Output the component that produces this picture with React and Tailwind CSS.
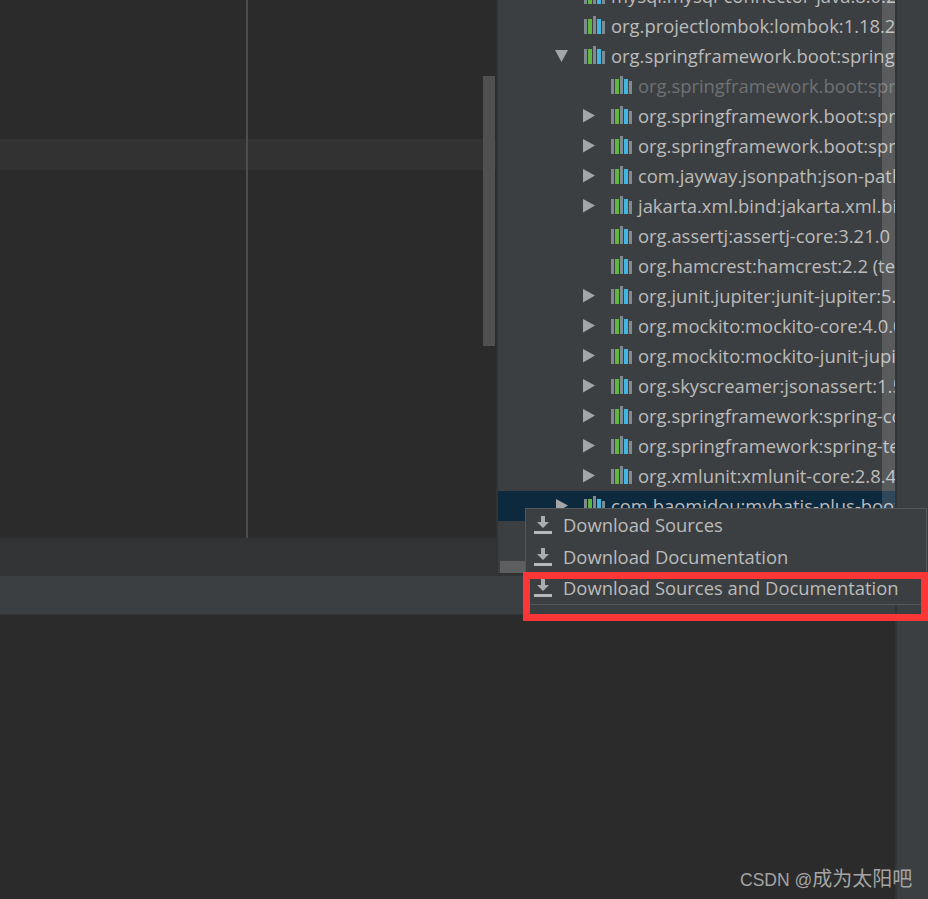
import React from "react";

const rows = [
  { level: 1, text: "mysql:mysql-connector-java:8.0.29 (runtime)" },
  { level: 1, text: "org.projectlombok:lombok:1.18.24" },
  { level: 1, arrow: "down", text: "org.springframework.boot:spring-boot-starter-test:2.7.0" },
  { level: 2, muted: true, text: "org.springframework.boot:spring-boot-starter:2.7.0" },
  { level: 2, arrow: "right", text: "org.springframework.boot:spring-boot-test:2.7.0" },
  { level: 2, arrow: "right", text: "org.springframework.boot:spring-boot-test-autoconfigure" },
  { level: 2, arrow: "right", text: "com.jayway.jsonpath:json-path:2.7.0" },
  { level: 2, arrow: "right", text: "jakarta.xml.bind:jakarta.xml.bind-api:2.3.3" },
  { level: 2, text: "org.assertj:assertj-core:3.21.0 (test)" },
  { level: 2, text: "org.hamcrest:hamcrest:2.2 (test)" },
  { level: 2, arrow: "right", text: "org.junit.jupiter:junit-jupiter:5.8.2" },
  { level: 2, arrow: "right", text: "org.mockito:mockito-core:4.0.0" },
  { level: 2, arrow: "right", text: "org.mockito:mockito-junit-jupiter:4.5.1" },
  { level: 2, arrow: "right", text: "org.skyscreamer:jsonassert:1.5.0" },
  { level: 2, arrow: "right", text: "org.springframework:spring-core:5.3.20" },
  { level: 2, arrow: "right", text: "org.springframework:spring-test:5.3.20" },
  { level: 2, arrow: "right", text: "org.xmlunit:xmlunit-core:2.8.4" },
  { level: 1, arrow: "right", selected: true, text: "com.baomidou:mybatis-plus-boot-starter:3.5.1" },
];

const LibIcon = () => (
  <svg width="22" height="18" viewBox="0 0 22 18" className="shrink-0 mb-[2px]">
    <rect x="0" y="3" width="3" height="15" fill="#7f8b91" />
    <rect x="4" y="3" width="4" height="15" fill="#62b543" />
    <rect x="9" y="0" width="3" height="18" fill="#7f8b91" />
    <rect x="13" y="3" width="4" height="15" fill="#40b6e0" />
    <rect x="18" y="5" width="3" height="13" fill="#7f8b91" />
  </svg>
);

const Arrow = ({ dir }) => (
  <svg width="14" height="14" viewBox="0 0 14 14" className="shrink-0">
    {dir === "down" ? (
      <polygon points="0,1 13,1 6.5,13" fill="#a3a5a6" />
    ) : (
      <polygon points="1,0 13,6.5 1,13.5" fill="#a3a5a6" />
    )}
  </svg>
);

const DownloadIcon = () => (
  <svg width="18" height="18" viewBox="0 0 18 18" className="shrink-0">
    <path d="M7 0h4v6h4l-6 6-6-6h4z" fill="#a9adb0" />
    <rect x="0" y="15" width="18" height="3" fill="#b6b8ba" />
  </svg>
);

const TreeRow = ({ row }) => (
  <div className={`h-[30px] flex items-center shrink-0 whitespace-nowrap ${row.selected ? "bg-[#0d293e]" : ""}`}>
    <div className={`${row.level === 2 ? "w-[98px]" : "w-[71px]"} shrink-0 flex justify-end`}>
      {row.arrow && <Arrow dir={row.arrow} />}
    </div>
    <div className="ml-[15px]">
      <LibIcon />
    </div>
    <span className={`ml-[5px] ${row.muted ? "text-[#6f7173]" : "text-[#bbbbbb]"}`}>{row.text}</span>
  </div>
);

const MenuItem = ({ label, height }) => (
  <div className={`${height} flex items-center pl-[8px] gap-[11px] text-[#bbbbbb]`}>
    <DownloadIcon />
    <span>{label}</span>
  </div>
);

export default function App() {
  return (
    <div className="relative w-[928px] h-[899px] overflow-hidden flex bg-[#2b2b2b] text-[18.4px] font-['Open_Sans','Noto_Sans',sans-serif]">
      <div className="w-[895px] flex flex-col shrink-0">
        <div className="h-[576px] flex shrink-0">
          <div className="w-[498px] flex flex-col shrink-0">
            {/* editor */}
            <div className="relative h-[539px] pt-[139px] border-b border-[#323232]">
              <div className="h-[31px] bg-[#323232]" />
              <div className="absolute left-[246px] top-0 bottom-0 w-[2px] bg-[#4d4d4d]" />
              <div className="absolute left-[483px] top-[76px] w-[12px] h-[270px] bg-[#505050]" />
              <div className="absolute right-0 top-0 bottom-0 w-[2px] bg-[#323232]" />
            </div>
            <div className="flex-1 bg-[#313335]" />
          </div>
          {/* dependency tree */}
          <div className="relative flex-1 bg-[#3c3f41] overflow-hidden">
            <div className="absolute inset-x-0 top-[-19px] w-[397px]">
              <div className="flex flex-col">
                {rows.map((r) => (
                  <TreeRow key={r.text} row={r} />
                ))}
              </div>
            </div>
            <div className="absolute left-[384px] top-0 w-[13px] h-[520px] bg-white/15" />
            <div className="absolute left-[2px] top-[561px] w-[30px] h-[12px] bg-[#5d5e5f]" />
            <div className="absolute left-0 right-0 bottom-0 h-[3px] bg-[#323232]" />
          </div>
        </div>
        <div className="h-[39px] bg-[#3c3f41] border-b border-[#333537] shrink-0" />
      </div>
      <div className="flex-1 bg-[#3c3f41] border-l-2 border-[#333536]" />

      {/* context menu */}
      <div className="absolute left-[525px] top-[508px] w-[402px] h-[97px] bg-[#3c3f41] border border-[#555759]">
        <MenuItem label="Download Sources" height="h-[32px]" />
        <MenuItem label="Download Documentation" height="h-[32px]" />
        <MenuItem label="Download Sources and Documentation" height="h-[30px]" />
      </div>

      {/* red annotation */}
      <div className="absolute left-[523px] top-[572px] w-[405px] h-[49px] border-[7px] border-[#fb3636]" />

      {/* watermark */}
      <div className="absolute left-[740px] top-[866px] text-[17.5px] leading-[26px] text-[#a4a4a4] whitespace-nowrap font-['Liberation_Sans','Noto_Sans_CJK_SC',sans-serif]">
        CSDN @<span className="text-[20px]">成为太阳吧</span>
      </div>
    </div>
  );
}
